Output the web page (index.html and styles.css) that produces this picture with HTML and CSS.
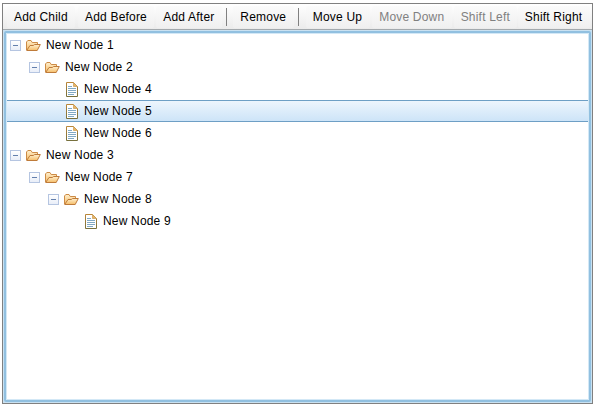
FILE: index.html
```
<!DOCTYPE html>
<html lang="en">
<head>
<meta charset="utf-8">
<title>Tree Editor</title>
<link rel="stylesheet" href="styles.css">
</head>
<body>
<svg class="defs" width="0" height="0" aria-hidden="true">
  <defs>
    <linearGradient id="gold" x1="0" y1="0" x2="0" y2="1"><stop offset="0" stop-color="#fff0cf"/><stop offset="1" stop-color="#f5bd68"/></linearGradient>
    <linearGradient id="edge" x1="0" y1="0" x2="0" y2="1"><stop offset="0" stop-color="#b9873a"/><stop offset="1" stop-color="#77703d"/></linearGradient>
  </defs>
  <symbol id="folder" viewBox="0 0 16 16">
    <path d="M1.5 13V5L2.8 3.5H6L7.2 5.5H12.5V8" fill="url(#gold)" stroke="#cd8b45"/>
    <path d="M1.7 13.5L5 8.5H8.3L9.6 7.5H15.3L12.2 13.5Z" fill="url(#gold)" stroke="#bf7b3a"/>
  </symbol>
  <symbol id="page" viewBox="0 0 16 16">
    <path d="M3.5 1.5H10.5L14.5 5.5V15.5H3.5Z" fill="#fff" stroke="url(#edge)"/>
    <path d="M10.5 1.5V5.5H14.5Z" fill="#e9b565" stroke="#c79b54" stroke-width=".7"/>
    <path d="M5 5.5H9M5 7.5H13M5 9.5H13M5 11.5H13M5 13.5H11" stroke="#81a9c4"/>
  </symbol>
</svg>
<main class="editor">
  <div class="toolbar">
    <button>Add Child</button>
    <button>Add Before</button>
    <button>Add After</button>
    <span class="separator"></span>
    <button>Remove</button>
    <span class="separator"></span>
    <button>Move Up</button>
    <button disabled>Move Down</button>
    <button disabled>Shift Left</button>
    <button>Shift Right</button>
  </div>
  <div class="focus-outer"><div class="focus-ring"><div class="tree">
    <div class="row"><i class="toggle"></i><svg class="icon"><use href="#folder"/></svg><span>New Node 1</span></div>
    <div class="row level-1"><i class="toggle"></i><svg class="icon"><use href="#folder"/></svg><span>New Node 2</span></div>
    <div class="row level-2"><i class="spacer"></i><svg class="icon"><use href="#page"/></svg><span>New Node 4</span></div>
    <div class="row level-2 selected"><i class="spacer"></i><svg class="icon"><use href="#page"/></svg><span>New Node 5</span></div>
    <div class="row level-2"><i class="spacer"></i><svg class="icon"><use href="#page"/></svg><span>New Node 6</span></div>
    <div class="row"><i class="toggle"></i><svg class="icon"><use href="#folder"/></svg><span>New Node 3</span></div>
    <div class="row level-1"><i class="toggle"></i><svg class="icon"><use href="#folder"/></svg><span>New Node 7</span></div>
    <div class="row level-2"><i class="toggle"></i><svg class="icon"><use href="#folder"/></svg><span>New Node 8</span></div>
    <div class="row level-3"><i class="spacer"></i><svg class="icon"><use href="#page"/></svg><span>New Node 9</span></div>
  </div></div></div>
</main>
</body>
</html>
```
FILE: styles.css
```
* { box-sizing: border-box; }
html, body { height: 100%; }
body {
  margin: 0;
  padding: 3px 0 4px 2px;
  background: #fff;
  color: #000;
  font: 12px/22px "Liberation Sans", Arial, sans-serif;
  letter-spacing: .18px;
  overflow: hidden;
}
.defs { position: absolute; }
.editor {
  display: flex;
  flex-direction: column;
  width: 591px;
  height: 401px;
  border: 1px solid #808080;
}
.toolbar {
  display: flex;
  align-items: center;
  flex: none;
  gap: 2px;
  height: 26px;
  padding-left: 4px;
  border-bottom: 1px solid #a3a9ad;
  background: linear-gradient(#fff, #ebebeb);
}
button {
  height: 22px;
  padding: 0 7.3px 0 7px;
  border: 0;
  border-radius: 2px;
  background: linear-gradient(#fbfbfb, #f0f0f0);
  color: #000;
  font: inherit;
  letter-spacing: .2px;
  white-space: nowrap;
}
button:first-child { margin-right: .8px; }
button:last-child { margin-left: -1.5px; }
button:disabled { color: #808080; }
.separator {
  flex: none;
  width: 1px;
  height: 18px;
  margin: 0 4.4px 0 2.2px;
  background: #808080;
}
.separator + button { margin-right: .7px; }
.focus-outer {
  display: flex;
  flex: 1;
  border: 1px solid #c9e1f1;
  background: #c9e1f1;
}
.focus-ring {
  display: flex;
  flex: 1;
  border: 2px solid #91c0e0;
  border-radius: 2px;
  background: #d3e8f6;
}
.tree {
  flex: 1;
  border: 1px solid #d3e8f6;
  border-radius: 1px;
  background: #fff;
}
.row {
  display: flex;
  align-items: center;
  height: 22px;
  padding-left: 3px;
}
.level-1 { padding-left: 22px; }
.level-2 { padding-left: 41px; }
.level-3 { padding-left: 60px; }
.selected {
  border: solid #6e9fc5;
  border-width: 1px 0;
  background: linear-gradient(#edf5fd, #cde4f8);
}
.toggle, .spacer { flex: none; width: 11px; height: 11px; margin: 1px 4px 0 0; }
.toggle {
  display: flex;
  align-items: center;
  justify-content: center;
  border: 1px solid #b5c5e1;
  background: linear-gradient(#fff, #e9eef8);
}
.toggle::before { content: ""; width: 5px; height: 1px; background: #6480ac; }
.icon { flex: none; width: 16px; height: 16px; margin-right: 5px; }
```
